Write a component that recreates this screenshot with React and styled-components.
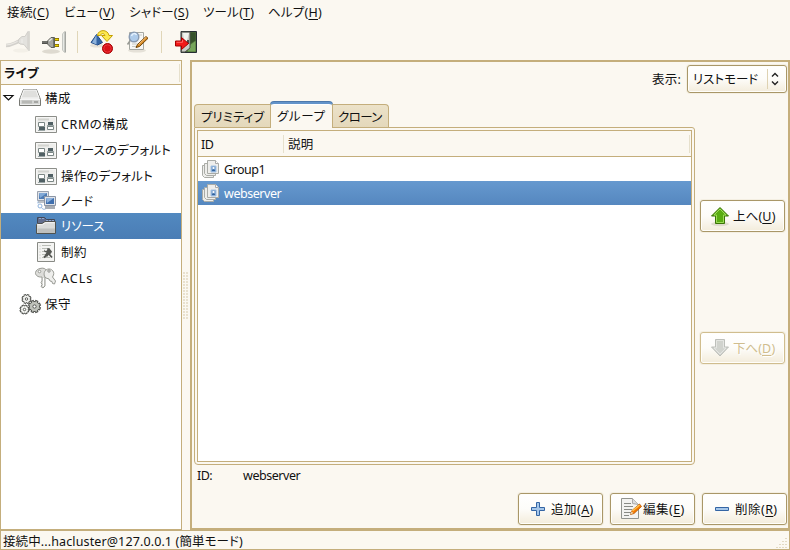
import React from 'react';
import styled, { createGlobalStyle, css } from 'styled-components';

const line = '#c4ae7c';
const paper = '#fbf8f1';

const Global = createGlobalStyle`
  * { box-sizing: border-box; }
  body { margin: 0; background: ${paper}; overflow: hidden; }
`;

const Window = styled.div`
  width: 790px;
  height: 550px;
  display: flex;
  flex-direction: column;
  background: ${paper};
  color: #111;
  font: 12.5px/18px 'Noto Sans', 'Noto Sans CJK JP', sans-serif;
  font-feature-settings: 'palt';
`;

const Text = styled.span`
  display: inline-block;
  white-space: pre;
  letter-spacing: ${(p) => p.$ls || 0}px;
  padding-top: ${(p) => p.$pt || 0}px;
`;

const Key = styled.u`
  text-decoration: underline;
  text-decoration-thickness: 1px;
  text-underline-offset: 2px;
  letter-spacing: 0.3px;
`;

const Label = ({ ls, pt, children, hot }) => (
  <Text $ls={ls} $pt={pt}>
    {children}
    {hot && <>(<Key>{hot}</Key>)</>}
  </Text>
);

const MenuBar = styled.nav`
  height: 26px;
  padding: 4px 0 0 7px;
  display: flex;
`;
const MenuItem = styled.div`
  width: ${(p) => p.$w}px;
  flex: none;
`;

const Toolbar = styled.div`
  height: 34px;
  padding: 4px 0 0 6px;
  display: flex;
`;
const ToolButton = styled.div`
  width: 24px;
  height: 24px;
  margin-right: ${(p) => p.$gap || 0}px;
`;
const ToolSeparator = styled.div`
  width: 1px;
  height: 22px;
  margin: 1px 12px 0 0;
  background: #e0d6b8;
`;

const Workspace = styled.main`
  height: 470px;
  display: flex;
`;
const Sidebar = styled.aside`
  width: 182px;
  border: 1px solid ${line};
  background: #fff;
`;
const SideHeader = styled.div`
  height: 24px;
  padding: 3px 1px 0 3px;
  display: flex;
  justify-content: space-between;
  border-bottom: 1px solid ${line};
  background: ${paper};
  font-weight: 700;
`;
const HeaderTick = styled.i`
  width: 1px;
  height: 18px;
  background: #e6e0cc;
`;
const TreeRow = styled.div`
  height: ${(p) => p.$h || 26}px;
  padding-left: ${(p) => (p.$depth ? 33 : 1)}px;
  display: flex;
  align-items: center;
  ${(p) => p.$selected && css`
    background: linear-gradient(#5289c0, #4a7db5);
    color: #fff;
  `}
`;
const Expander = styled.div`
  width: 16px;
  height: 24px;
`;
const TreeIcon = styled.div`
  width: 24px;
  height: 24px;
  margin-right: 3px;
`;
const RowIcon = styled.div`
  width: 24px;
  height: 20px;
`;
const Splitter = styled.div`
  width: 8px;
  display: flex;
  align-items: center;
  justify-content: center;
`;
const Grip = styled.div`
  width: 6px;
  height: 48px;
  margin-top: 1px;
  background: radial-gradient(circle at 1px 1px, #d6c9a8 0.5px, transparent 0.9px) 0 0 / 3px 3px;
`;

const Content = styled.section`
  width: 600px;
  border: 2px solid ${line};
  display: flex;
  flex-direction: column;
`;
const ViewRow = styled.div`
  height: 39px;
  padding: 3px 1px 0 0;
  display: flex;
  justify-content: flex-end;
`;
const ViewCaption = styled.div`
  padding-top: 5px;
  width: 35px;
`;
const buttonFace = css`
  border: 1px solid ${(p) => (p.$disabled ? '#d0bd8e' : '#a99768')};
  border-radius: 3px;
  background: linear-gradient(#fff, #fdfcf9 50%, #f3ecdb);
  box-shadow: inset 0 0 0 1px #fffefa, 0 0 0 1px #f4efe2;
`;
const Combo = styled.div`
  ${buttonFace}
  width: 100px;
  height: 28px;
  padding: 4px 0 0 5px;
  display: flex;
`;
const ComboValue = styled.div`
  width: 74px;
`;
const ComboArrow = styled.div`
  width: 17px;
  height: 20px;
  margin-top: -1px;
  border-left: 1px solid #ded2b2;
`;
const Middle = styled.div`
  height: 364px;
  display: flex;
  padding-left: 2px;
`;
const Notebook = styled.div`
  width: 501px;
`;
const Tabs = styled.div`
  height: 26px;
  display: flex;
  align-items: flex-end;
`;
const Tab = styled.div`
  width: ${(p) => p.$w}px;
  height: 23px;
  padding: 4px 0 0 ${(p) => p.$pad || 6}px;
  border: 1px solid ${line};
  border-bottom: 0;
  border-radius: ${(p) => p.$radius};
  background: linear-gradient(#ece2c9, #e4d8bb);
  ${(p) => p.$active && css`
    height: 26px;
    padding-top: 4px;
    margin: 0 -1px -1px;
    z-index: 1;
    border-top: 2px solid #6394ca;
    background: ${paper};
    box-shadow: inset 0 1px #fff, 0 -1px #4d79ac;
    border-radius: 4px 4px 0 0;
  `}
`;
const TabPage = styled.div`
  height: 338px;
  padding: 2px;
  border: 1px solid ${line};
  border-radius: 0 3px 4px 4px;
`;
const List = styled.div`
  height: 332px;
  border: 1px solid ${line};
  background: #fff;
`;
const ListHeader = styled.div`
  height: 26px;
  padding: 4px 1px 0 3px;
  display: flex;
  background: ${paper};
  border-bottom: 1px solid ${line};
`;
const IdColumn = styled.div`
  width: 82px;
`;
const DescriptionColumn = styled.div`
  flex: 1;
  padding-left: 4px;
`;
const ListRow = styled.div`
  height: 24px;
  padding-left: 2px;
  display: flex;
  align-items: center;
  ${(p) => p.$selected && css`
    background: linear-gradient(#6699cf, #5587bf);
    color: #fff;
  `}
`;
const OrderColumn = styled.div`
  padding: 99px 0 0 5px;
  display: flex;
  flex-direction: column;
  gap: 100px;
`;
const Button = styled.button`
  ${buttonFace}
  width: 85px;
  height: 32px;
  padding: 0 0 0 7px;
  display: flex;
  align-items: center;
  gap: 1px;
  font: inherit;
  font-feature-settings: inherit;
  color: ${(p) => (p.$disabled ? '#d0bd8e' : '#111')};
  ${(p) => p.$disabled && css`text-shadow: 1px 1px #fff;`}
`;
const Details = styled.div`
  height: 28px;
  padding: 2px 0 0 5px;
  display: flex;
`;
const DetailName = styled.div`
  width: 46px;
`;
const Actions = styled.div`
  display: flex;
  justify-content: flex-end;
  gap: 7px;
  padding-right: 1px;
`;
const StatusBar = styled.footer`
  height: 20px;
  padding: 1px 1px 0 2px;
  display: flex;
  justify-content: space-between;
  border: 1px solid ${line};
`;

const Svg = styled.svg`
  display: block;
  flex: none;
`;
const Icon = ({ size = 24, children }) => (
  <Svg width={size} height={size} viewBox={`0 0 ${size} ${size}`} fill="none">{children}</Svg>
);

const PlugOff = () => (
  <Icon>
    <ellipse cx="15" cy="20.500" rx="8" ry="2" fill="#f3f0e8" />
    <path d="M0 15.500c6 0 9-3 14-4.500" stroke="#d3d1cc" strokeWidth="3.500" />
    <path d="M0 15c6 0 9-3 14-4.500" stroke="#eae8e3" strokeWidth="1.200" />
    <path d="m13 9 3-2.500h3l3-5v18l-4-5-4-.5-2-2z" fill="#e3e2de" stroke="#d0cec9" />
    <path d="M16 9v4" stroke="#f0efec" />
    <path d="M22.500 1.500h1v19h-1z" fill="#f0efec" stroke="#d0cec9" strokeWidth=".7" />
  </Icon>
);
const PlugOn = () => (
  <Icon>
    <ellipse cx="9" cy="21.500" rx="9" ry="2.200" fill="#dedad0" />
    <path d="M0 12.500h6" stroke="#50514d" strokeWidth="3" />
    <path d="M0 12h5" stroke="#8e908b" />
    <path d="M5.500 11 9 7.500h3.500v10H9L5.500 14z" fill="#a5a6a2" stroke="#5d5f59" />
    <path d="m7 11 3-2.500" stroke="#e4e5e2" strokeWidth="1.500" />
    <path d="M11.500 8v9" stroke="#72746e" />
    <path d="M13 9.500h4M13 15.500h4" stroke="#765f00" strokeWidth="3.200" />
    <path d="M13 9.500h3.500M13 15.500h3.500" stroke="#f0d800" strokeWidth="1.500" />
    <path d="m20.500 4 2-2.500v21l-2-2.500z" fill="#e7e9e5" stroke="#babcb7" strokeWidth=".8" />
    <path d="M23.500 1.500v21" stroke="#a5a7a2" />
  </Icon>
);
const Convert = () => (
  <Icon>
    <ellipse cx="7" cy="15.500" rx="7" ry="2" fill="#e7e2d7" />
    <path d="m6.500 4.500 6 8-5 2.500-6.500-2.500z" fill="#3465a4" stroke="#204a87" />
    <path d="M6.500 5v9.500L2 12.500z" fill="#8db2dc" />
    <path d="M7.500 5.500C8-1 18-1 19 5.500h3.500l-5.500 6-5.500-6H15c-1-2.500-4-2.500-4.500 0z" fill="#fce94f" stroke="#c4a000" />
    <circle cx="17.500" cy="18.500" r="5" fill="#d81118" stroke="#a40000" />
    <circle cx="17.500" cy="18.500" r="3.700" stroke="#ef4048" strokeWidth=".7" />
  </Icon>
);
const Inspect = () => (
  <Icon>
    <ellipse cx="11" cy="20.500" rx="9" ry="2" fill="#e5e1d8" />
    <path d="M3.500 2.500h14v17h-14z" fill="#f7f7f5" stroke="#a6a8a2" />
    <path d="M6 14h7M6 16.500h7M13 5h3" stroke="#c7c9c3" />
    <circle cx="8" cy="7" r="4.800" fill="#aecbea" stroke="#899bb2" strokeWidth="1.400" />
    <path d="M5.500 6c1-3 4-3 5-1" stroke="#e5f2ff" strokeWidth="1.500" />
    <path d="m4 11-2.500 3.500" stroke="#999b95" strokeWidth="1.600" />
    <path d="m10 17.500 1.500-3 8.500-8 2 1.800-8.500 8.200z" fill="#d78c27" stroke="#704407" />
    <path d="m12.500 14.500 8-7.500" stroke="#fcc27d" />
  </Icon>
);
const Exit = () => (
  <Icon>
    <path d="M7 1.500h15.500v21H7z" fill="#4a6b38" stroke="#252d33" />
    <path d="M16 2.500h5.500v8l-5.500 3z" fill="#36522b" />
    <path d="m16 15 5.500-4v10.500h-8z" fill="#76a65b" />
    <path d="M7.500 2h8.500v16l-5 4H7.500z" fill="#c9ccc6" stroke="#50534d" />
    <path d="M9 3h6l-4 15z" fill="#f1f3ef" />
    <path d="M14 10v4" stroke="#222" strokeWidth="1.500" />
    <path d="M1.500 11h6V7.500l7 6-7 6V16h-6z" fill="#f31919" stroke="#a40000" />
    <path d="M2.500 12.300h6V10" stroke="#ff6868" />
  </Icon>
);
const Drive = () => (
  <Icon>
    <path d="m5.500 3.500h13l4 10v5.500h-21v-5.500z" fill="#e8e8e7" stroke="#777873" />
    <path d="M6 4h12l3 8H3z" fill="#dfdfdd" stroke="#f7f7f7" />
    <path d="M2 13.500h20v5H2z" fill="#d3d4d2" stroke="#fff" strokeWidth=".7" />
    <path d="M5 14.500v3m2-3v3m2-3v3m2-3v3m2-3v3" stroke="#9b9c98" />
    <path d="M16 16h4" stroke="#a5a6a3" strokeWidth="2" />
    <path d="M1.500 13.500V19.500h21v-6" stroke="#777873" />
  </Icon>
);
const Config = () => (
  <Icon>
    <path d="M1.500 4.500h21v16h-21z" fill="#f6f6f5" stroke="#8c8e89" />
    <path d="M3 6h18v13H3z" fill="#eeeeec" />
    <path d="M4 7.500h11" stroke="#d3d4d0" strokeWidth="2" />
    <path d="M4.500 10.500h6v4h-6zM13.500 14.500h6v3h-6z" fill="#fff" stroke="#7b8785" />
    <path d="M5 15h6v3H5zM14 10h5v4h-5z" fill="#506064" />
    <path d="M4 18.500h7M13 13.500h7" stroke="#9aa5a5" />
  </Icon>
);
const Nodes = () => (
  <Icon>
    <path d="M3.500 2.500h11v9h-11z" fill="#dfe3ea" stroke="#9aa2af" />
    <path d="M5 4h8v6H5z" fill="#4d7bb5" />
    <path d="m5 4h8L6 9z" fill="#82a9d6" />
    <path d="M4 13h8" stroke="#bcc1c7" strokeWidth="2" />
    <path d="M10.500 7.500h11v9h-11z" fill="#dfe3ea" stroke="#8b95a4" />
    <path d="M12 9h8v6h-8z" fill="#3f6fae" />
    <path d="M12 9h8l-7 5z" fill="#8fb3dd" />
    <path d="M11 18.500h10" stroke="#a8adb4" strokeWidth="3" />
    <circle cx="6" cy="17" r="2" stroke="#8fb3dd" />
    <path d="M7.500 18.500c1 2 2.500 2 4 1.500M4 14.500v-2" stroke="#8fb3dd" />
  </Icon>
);
const Folder = () => (
  <Icon>
    <path d="M3.500 9V3.500h7l2 2h8V9" fill="#616d8d" stroke="#414858" />
    <path d="M5 4.500h5m2 2h8" stroke="#91a8d0" strokeDasharray="2 1" />
    <path d="M2.500 10.500 3.500 9.500H8l3-2h10.500v12h-19z" fill="#dadbd9" stroke="#51534f" />
    <path d="M3.500 10.700H8.500l3-2h9" stroke="#f7f7f7" />
    <path d="M3.500 14.500h17.500v4.500H3.500z" fill="#bfc0be" />
  </Icon>
);
const Constraints = () => (
  <Icon>
    <path d="M3.500 2.500h17v19h-17z" fill="#f4f4f2" stroke="#888a85" />
    <path d="M8 5.500h9M8 8.500h8M8 11.500h8M8 14.500h8M8 17.500h8M5.500 6h1m-1 3h1m-1 3h1m-1 3h1m-1 3h1" stroke="#babdb6" />
    <path d="m10 9.500 1.500 1.500 1.500-.5.500-2.500 2 .5 2.500 3-1 2-2 1-2 2.500-2-2 1.500-2.500-2-.5z" fill="#555753" />
    <path d="m14.500 13.500 3.500 4m-8 0 3-3" stroke="#555753" strokeWidth="1.800" />
  </Icon>
);
const Keys = () => (
  <Icon>
    <path d="M6 2.500c3-1 6 0 6.500 2.500s0 4-1.500 5v10l-2 2-2-1.500 1-2-1-2 1-1.500v-4C4 11.500 1 9 1.500 6.500S4 3 6 2.500z" fill="#ddddda" stroke="#999b95" />
    <path d="M12 4c4-3 9 1 7.500 5l-1 2 3 4-1 3-2-.5-.5-2-2-.5-1-2-3-1c-3-2-2-7 0-8z" fill="#eeeeec" stroke="#999b95" />
    <circle cx="5.500" cy="5.500" r="1.300" fill="#fff" stroke="#999b95" />
    <circle cx="15" cy="5" r="1.200" fill="#fff" stroke="#888a85" />
    <path d="M9.500 12v8" stroke="#fff" />
  </Icon>
);
const gearTeeth = [0, 45, 90, 135, 180, 225, 270, 315];
const Gear = ({ x, y, r, tone }) => (
  <g transform={`translate(${x} ${y})`}>
    {gearTeeth.map((a) => (
      <path key={a} d={`M0 0V${-r}`} transform={`rotate(${a + 22.5})`} stroke="#4c4e4a" strokeWidth={r * 0.5} />
    ))}
    <circle r={r * 0.84} fill="#4c4e4a" />
    {gearTeeth.map((a) => (
      <path key={a} d={`M0 0V${1 - r}`} transform={`rotate(${a + 22.5})`} stroke={tone} strokeWidth={r * 0.25} />
    ))}
    <circle r={r * 0.84 - 0.9} fill={tone} />
    <circle r={r * 0.25} fill="#fff" stroke="#4c4e4a" strokeWidth=".9" />
  </g>
);
const Gears = () => (
  <Icon>
    <Gear x={8.5} y={7} r={5} tone="#f3f4f1" />
    <Gear x={16.5} y={14.500} r={6.500} tone="#bfc2bb" />
    <Gear x={6.5} y={17.500} r={5} tone="#f3f4f1" />
  </Icon>
);
const Group = () => (
  <Icon size={20}>
    <g fill="#eeeeec" stroke="#aaaca7">
      <path d="M2.500 6.500h11v12h-9l-2-2z" />
      <path d="M4.500 4.500h11v12h-9l-2-2z" />
      <path d="M7.500 1.500h8l3 3v10h-11z" />
    </g>
    <path d="M15.500 1.500v3h3" fill="#fff" stroke="#aaa" />
    <path d="M11 7h5v6h-5z" fill="#719ccb" stroke="#a5c2e3" />
    <circle cx="13.500" cy="9" r="1.100" fill="#fff" />
    <path d="M12 12c0-2 3-2 3 0" fill="#315f99" />
  </Icon>
);
const Up = () => (
  <Icon>
    <ellipse cx="12" cy="20" rx="9" ry="2.200" fill="#dfdbcc" />
    <path d="m12 3.500 8.500 8.500h-4v7.500h-9V12h-4z" fill="#59ad11" stroke="#3a7304" />
    <path d="m12 5 6 6h-2.500v7.500h-7V11H6z" stroke="#9ddb57" />
  </Icon>
);
const Down = () => (
  <Icon>
    <path d="M7.500 3.500h9V11h4L12 20 3.500 11h4z" fill="#d1d3ce" stroke="#bdbfba" />
    <path d="M8.500 4.500h7V12H18l-6 6-6-6h2.500z" stroke="#e5e6e3" />
  </Icon>
);
const Add = () => (
  <Icon>
    <path d="M10.500 5.500h3v5h5v3h-5v5h-3v-5h-5v-3h5z" fill="#a5c6e9" stroke="#3465a4" />
  </Icon>
);
const Remove = () => (
  <Icon>
    <path d="M5.500 10.500h13v3h-13z" fill="#a5c6e9" stroke="#3465a4" />
  </Icon>
);
const Edit = () => (
  <Icon>
    <path d="M3.500 1.500h11l6 6v14h-17z" fill="#f3f3f1" stroke="#92948f" />
    <path d="M14.500 1.500v5l6 1" fill="#ddd" stroke="#aaa" />
    <path d="M6 6.500h7M6 9.500h9M6 12.500h8M6 15.500h7M6 18.500h5" stroke="#888a85" />
    <path d="m12.500 17.500 1.500-4 7.500-6.500 2 2.500-7.500 7z" fill="#f57900" stroke="#b55500" strokeWidth=".8" />
    <path d="m14.500 14 7-6" stroke="#fcc04e" strokeWidth="1.500" />
    <path d="m12.500 17.500 1-3 2 1.500z" fill="#edd6ae" />
  </Icon>
);

const menus = [
  ['接続', 'C', 57, 0.4], ['ビュー', 'V', 65, 0.2], ['シャドー', 'S', 74, 0.2], ['ツール', 'T', 65, 0.2], ['ヘルプ', 'H', 60, 0.2],
];
const tree = [
  { text: 'CRMの構成', icon: Config, ls: 0.6 },
  { text: 'リソースのデフォルト', icon: Config, ls: 0.1 },
  { text: '操作のデフォルト', icon: Config, ls: 0.2 },
  { text: 'ノード', icon: Nodes, h: 24 },
  { text: 'リソース', icon: Folder, selected: true },
  { text: '制約', icon: Constraints, ls: 0.5 },
  { text: 'ACLs', icon: Keys, ls: 1 },
];

export default function App() {
  return (
    <Window>
      <Global />
      <MenuBar>
        {menus.map(([text, hot, w, ls]) => (
          <MenuItem key={hot} $w={w}><Label hot={hot} ls={ls}>{text}</Label></MenuItem>
        ))}
      </MenuBar>
      <Toolbar>
        <ToolButton $gap={12}><PlugOff /></ToolButton>
        <ToolButton $gap={11}><PlugOn /></ToolButton>
        <ToolSeparator />
        <ToolButton $gap={12}><Convert /></ToolButton>
        <ToolButton $gap={11}><Inspect /></ToolButton>
        <ToolSeparator />
        <ToolButton><Exit /></ToolButton>
      </Toolbar>
      <Workspace>
        <Sidebar>
          <SideHeader><Label pt={1} ls={0.3}>ライブ</Label><HeaderTick /></SideHeader>
          <TreeRow>
            <Expander>
              <Svg width="16" height="24"><path d="M2 9.500h9L6.500 14z" fill="#fff" stroke="#111" strokeWidth="1.200" /></Svg>
            </Expander>
            <TreeIcon><Drive /></TreeIcon>
            <Label pt={2} ls={0.5}>構成</Label>
          </TreeRow>
          {tree.map(({ text, icon: Glyph, h, selected, ls }) => (
            <TreeRow key={text} $depth={1} $h={h} $selected={selected}>
              <TreeIcon><Glyph /></TreeIcon>
              <Label pt={2} ls={ls}>{text}</Label>
            </TreeRow>
          ))}
          <TreeRow>
            <Expander />
            <TreeIcon><Gears /></TreeIcon>
            <Label pt={2} ls={0.5}>保守</Label>
          </TreeRow>
        </Sidebar>
        <Splitter><Grip /></Splitter>
        <Content>
          <ViewRow>
            <ViewCaption><Label pt={1} ls={0.3}>表示:</Label></ViewCaption>
            <Combo>
              <ComboValue><Label pt={1}>リストモード</Label></ComboValue>
              <ComboArrow>
                <Svg width="16" height="20"><path d="m4 7.500 3-3 3 3M4 12.500l3 3 3-3" fill="none" stroke="#222" strokeWidth="1.400" /></Svg>
              </ComboArrow>
            </Combo>
          </ViewRow>
          <Middle>
            <Notebook>
              <Tabs>
                <Tab $w={77} $radius="4px 0 0 0"><Label>プリミティブ</Label></Tab>
                <Tab $w={63} $active><Label ls={0.6}>グループ</Label></Tab>
                <Tab $w={57} $pad={5} $radius="0 4px 0 0"><Label ls={-0.6}>クローン</Label></Tab>
              </Tabs>
              <TabPage>
                <List>
                  <ListHeader>
                    <IdColumn><Label pt={1} ls={-0.5}>ID</Label></IdColumn>
                    <HeaderTick />
                    <DescriptionColumn><Label pt={1} ls={0.3}>説明</Label></DescriptionColumn>
                    <HeaderTick />
                  </ListHeader>
                  <ListRow><RowIcon><Group /></RowIcon><Label pt={2} ls={-0.5}>Group1</Label></ListRow>
                  <ListRow $selected><RowIcon><Group /></RowIcon><Label pt={2} ls={-0.45}>webserver</Label></ListRow>
                </List>
              </TabPage>
            </Notebook>
            <OrderColumn>
              <Button><Up /><Label pt={2} ls={0.1} hot="U">上へ</Label></Button>
              <Button $disabled><Down /><Label pt={2} hot="D">下へ</Label></Button>
            </OrderColumn>
          </Middle>
          <Details>
            <DetailName><Label ls={-0.5}>ID:</Label></DetailName>
            <Label ls={-0.45}>webserver</Label>
          </Details>
          <Actions>
            <Button><Add /><Label pt={2} ls={0.5} hot="A">追加</Label></Button>
            <Button><Edit /><Label pt={2} ls={0.5} hot="E">編集</Label></Button>
            <Button><Remove /><Label pt={2} ls={0.5} hot="R">削除</Label></Button>
          </Actions>
        </Content>
      </Workspace>
      <StatusBar>
        <Label pt={1} ls={0.12}>接続中...hacluster@127.0.0.1 (簡単モード)</Label>
        <Svg width="12" height="18">
          <path d="M10 6v1M10 9v1M7 9v1M10 12v1M7 12v1M4 12v1M10 15v1M7 15v1M4 15v1M1 15v1" stroke="#c9bb94" />
        </Svg>
      </StatusBar>
    </Window>
  );
}
